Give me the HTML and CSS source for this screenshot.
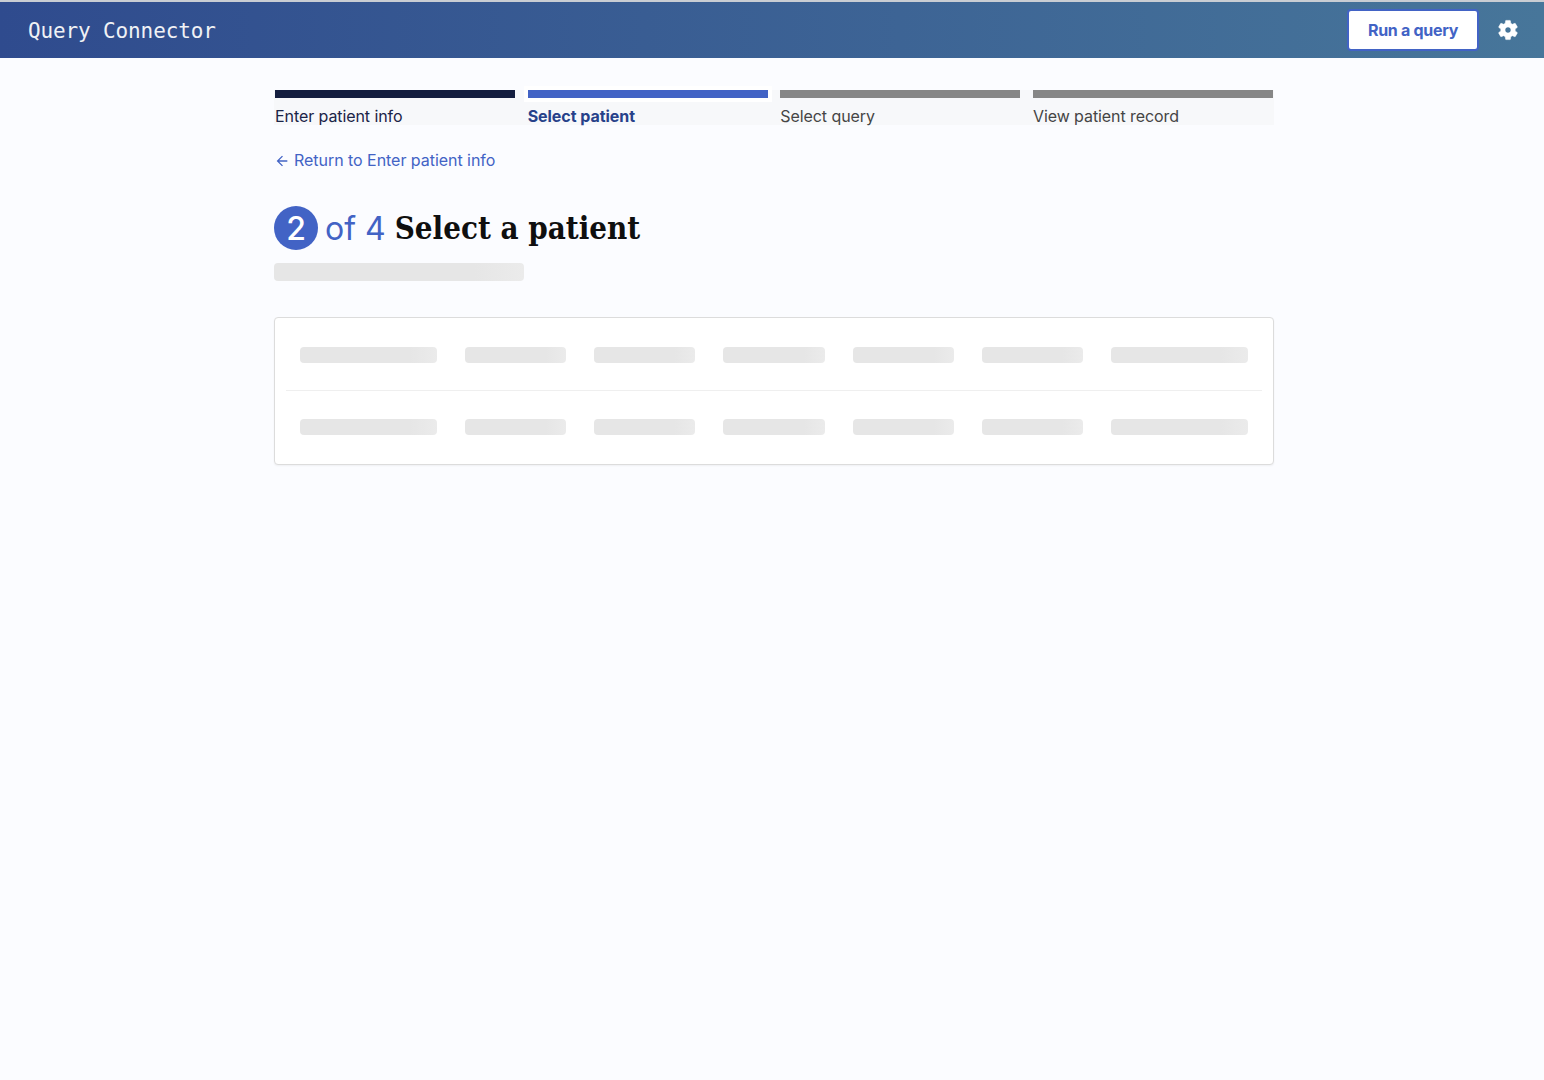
FILE: index.html
```html
<html>
  <head>
    <link rel="stylesheet" href="styles.css">
    <title>Query Connector</title>
  </head>
  <body>
    <header class="site-header">
      <span class="brand">Query Connector</span>
      <div class="header-actions">
        <a class="run-button">Run a query</a>
        <svg class="gear" viewBox="0 0 24 24"><path d="M19.14 12.94c.04-.3.06-.61.06-.94 0-.32-.02-.64-.07-.94l2.03-1.58a.49.49 0 0 0 .12-.61l-1.92-3.32a.488.488 0 0 0-.59-.22l-2.39.96c-.5-.38-1.03-.7-1.62-.94l-.36-2.54a.484.484 0 0 0-.48-.41h-3.84c-.24 0-.43.17-.47.41l-.36 2.54c-.59.24-1.13.57-1.62.94l-2.39-.96c-.22-.08-.47 0-.59.22L2.74 8.87c-.12.21-.08.47.12.61l2.03 1.58c-.05.3-.09.63-.09.94s.02.64.07.94l-2.03 1.58a.49.49 0 0 0-.12.61l1.92 3.32c.12.22.37.29.59.22l2.39-.96c.5.38 1.03.7 1.62.94l.36 2.54c.05.24.24.41.48.41h3.84c.24 0 .44-.17.47-.41l.36-2.54c.59-.24 1.13-.56 1.62-.94l2.39.96c.22.08.47 0 .59-.22l1.92-3.32c.12-.22.07-.47-.12-.61l-2.01-1.58zM12 15c-1.65 0-3-1.35-3-3s1.35-3 3-3 3 1.35 3 3-1.35 3-3 3z"/></svg>
      </div>
    </header>
    <main class="page">
      <ol class="steps">
        <li class="step done">Enter patient info</li>
        <li class="step current">Select patient</li>
        <li class="step">Select query</li>
        <li class="step">View patient record</li>
      </ol>
      <a class="back-link">
        <svg class="back-arrow" viewBox="0 0 24 24"><path d="M20 11H7.83l5.59-5.59L12 4l-8 8 8 8 1.41-1.41L7.83 13H20v-2z"/></svg>
        Return to Enter patient info
      </a>
      <h1 class="title">
        <span class="step-num">2</span>
        <span class="step-of">of 4</span>
        <span class="title-text">Select a patient</span>
      </h1>
      <div class="skeleton subtitle"></div>
      <div class="card">
        <div class="row">
          <div class="skeleton"></div>
          <div class="skeleton"></div>
          <div class="skeleton"></div>
          <div class="skeleton"></div>
          <div class="skeleton"></div>
          <div class="skeleton"></div>
          <div class="skeleton"></div>
        </div>
        <div class="row">
          <div class="skeleton"></div>
          <div class="skeleton"></div>
          <div class="skeleton"></div>
          <div class="skeleton"></div>
          <div class="skeleton"></div>
          <div class="skeleton"></div>
          <div class="skeleton"></div>
        </div>
      </div>
    </main>
  </body>
</html>
```

FILE: styles.css
```css
body {
  margin: 0;
  min-height: 1080px;
  background-color: #fbfcff;
  font-family: "Inter", sans-serif;
  font-size: 16px;
}

.site-header {
  height: 56px;
  border-top: 2px solid #c9cdd3;
  padding: 0 24px 0 28px;
  display: flex;
  justify-content: space-between;
  align-items: center;
  background: linear-gradient(90deg, #2f4b8e, #47769a);
}
.brand {
  position: relative;
  top: 1px;
  font-family: "DejaVu Sans Mono", monospace;
  font-size: 21px;
  letter-spacing: -0.13px;
  color: #f0f2f5;
}
.header-actions {
  display: flex;
  align-items: center;
  gap: 17px;
}
.run-button {
  box-sizing: border-box;
  width: 132px;
  height: 42px;
  display: flex;
  justify-content: center;
  align-items: center;
  background-color: white;
  border: 2px solid #4263c5;
  border-radius: 4px;
  color: #4263c5;
  font-weight: 700;
  letter-spacing: -0.3px;
}
.gear {
  width: 24px;
  height: 24px;
  fill: white;
  stroke: white;
  stroke-width: 0.5;
}

.page {
  width: 1000px;
  margin: 0 auto;
  padding: 32px 0 0 4px;
}

.steps {
  list-style: none;
  margin: 0;
  padding: 0 1px;
  height: 35px;
  display: grid;
  grid-template-columns: repeat(4, 240px);
  justify-content: space-between;
  background-color: #f7f8fa;
}
.step {
  color: #454545;
  line-height: 19px;
  letter-spacing: -0.08px;
}
.step::before {
  content: "";
  display: block;
  height: 8px;
  margin-bottom: 9px;
  background-color: #868686;
}
.step.done {
  color: #1b2448;
}
.step.done::before {
  background-color: #141e3f;
}
.step.current {
  color: #27418a;
  font-weight: 700;
  letter-spacing: -0.05px;
}
.step.current::before {
  background-color: #4263c5;
  outline: 4px solid white;
}

.back-link {
  display: flex;
  align-items: center;
  gap: 4px;
  margin-top: 26px;
  color: #4263c5;
  line-height: 19px;
  letter-spacing: -0.04px;
}
.back-arrow {
  width: 16px;
  height: 16px;
  fill: #4263c5;
}

.title {
  display: flex;
  align-items: center;
  margin: 36px 0 0;
  height: 44px;
  font-size: 32px;
  font-weight: 400;
}
.step-num {
  width: 44px;
  height: 44px;
  border-radius: 50%;
  display: flex;
  justify-content: center;
  align-items: center;
  background-color: #4263c5;
  color: white;
  font-weight: 500;
}
.step-of {
  margin-left: 7px;
  color: #4263c5;
}
.title-text {
  margin-left: 9px;
  font-family: "DejaVu Serif Condensed", "DejaVu Serif", serif;
  font-stretch: condensed;
  font-size: 31px;
  font-weight: 700;
  color: #0f0f0f;
}

.skeleton {
  height: 16px;
  border-radius: 4px;
  background: linear-gradient(90deg, #e6e6e6 80%, #ebebeb);
}
.skeleton.subtitle {
  width: 250px;
  height: 18px;
  margin-top: 13px;
}

.card {
  margin-top: 36px;
  padding: 1px 11px;
  background-color: white;
  border: 1px solid #dcdcdc;
  border-radius: 4px;
  box-shadow: 0 1px 2px rgba(0, 0, 0, 0.05);
}
.row {
  display: grid;
  grid-template-columns: 137fr 101fr 101fr 102fr 101fr 101fr 137fr;
  column-gap: 28px;
  padding: 28px 14px;
}
.row:first-child {
  padding-bottom: 27px;
  border-bottom: 1px solid #efefef;
}
```
